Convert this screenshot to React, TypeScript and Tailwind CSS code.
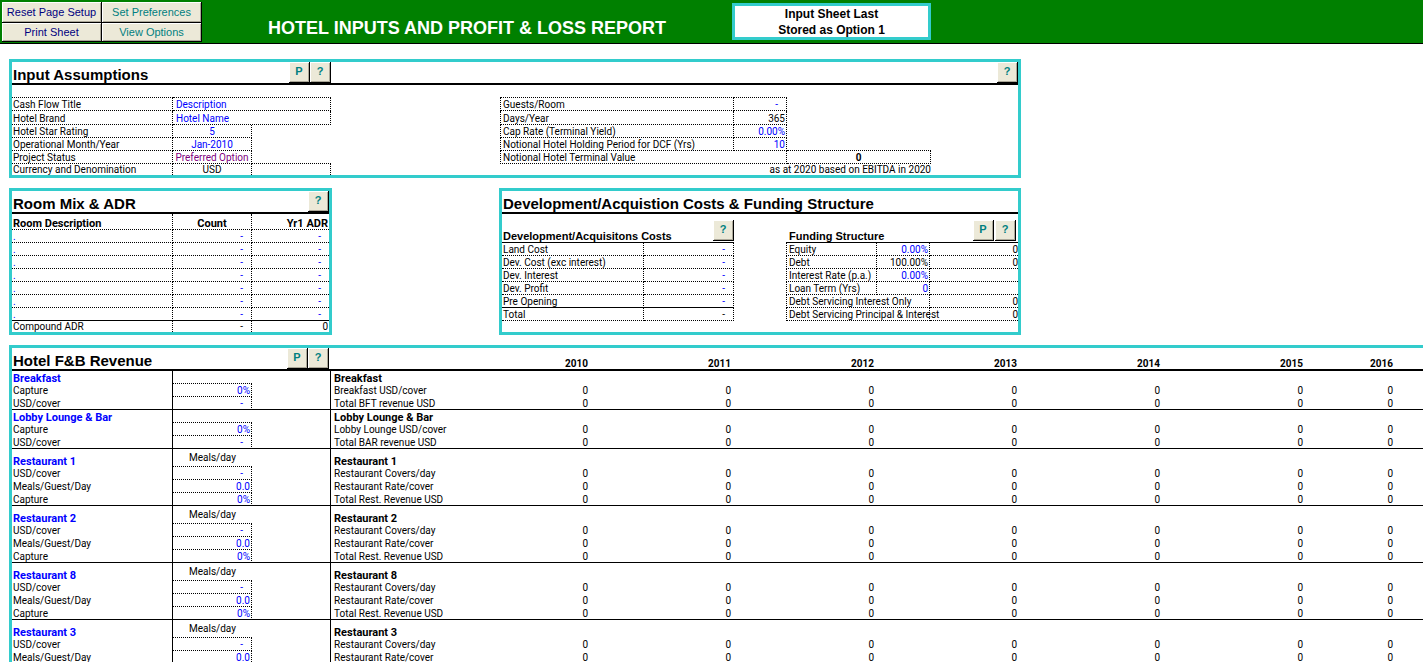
import React from 'react';
import clsx from 'clsx';

interface FieldRow {
  label: string;
  value: string;
  tone?: string;
}

interface RevenueBlock {
  title: string;
  mealsPerDay?: boolean;
  rows: { label: string; value: string; result: string }[];
}

const YEARS = ['2010', '2011', '2012', '2013', '2014', '2015', '2016'];

const COST_ROWS = ['Land Cost', 'Dev. Cost (exc interest)', 'Dev. Interest', 'Dev. Profit', 'Pre Opening'];

const FUNDING_ROWS = [
  { label: 'Equity', value: '0.00%', amount: '0', tone: 'text-[#0000ff]' },
  { label: 'Debt', value: '100.00%', amount: '0', tone: 'text-black' },
  { label: 'Interest Rate (p.a.)', value: '0.00%', amount: '', tone: 'text-[#0000ff]' },
  { label: 'Loan Term (Yrs)', value: '0', amount: '', tone: 'text-[#0000ff]' },
];

const PROJECT_ROWS: FieldRow[] = [
  { label: 'Hotel Star Rating', value: '5', tone: 'text-[#0000ff]' },
  { label: 'Operational Month/Year', value: 'Jan-2010', tone: 'text-[#0000ff]' },
  { label: 'Project Status', value: 'Preferred Option', tone: 'text-[#800080]' },
];

const restaurant = (title: string): RevenueBlock => ({
  title,
  mealsPerDay: true,
  rows: [
    { label: 'USD/cover', value: '-', result: 'Restaurant Covers/day' },
    { label: 'Meals/Guest/Day', value: '0.0', result: 'Restaurant Rate/cover' },
    { label: 'Capture', value: '0%', result: 'Total Rest. Revenue USD' },
  ],
});

const REVENUE: RevenueBlock[] = [
  {
    title: 'Breakfast',
    rows: [
      { label: 'Capture', value: '0%', result: 'Breakfast USD/cover' },
      { label: 'USD/cover', value: '-', result: 'Total BFT revenue USD' },
    ],
  },
  {
    title: 'Lobby Lounge & Bar',
    rows: [
      { label: 'Capture', value: '0%', result: 'Lobby Lounge USD/cover' },
      { label: 'USD/cover', value: '-', result: 'Total BAR revenue USD' },
    ],
  },
  restaurant('Restaurant 1'),
  restaurant('Restaurant 2'),
  restaurant('Restaurant 8'),
  restaurant('Restaurant 3'),
];

// Dashes stand for zero and sit a little further from the cell edge
const valuePad = (value: string) => (value === '-' ? 'pr-2' : 'pr-px');

const TABLE = "table-fixed border-separate border-spacing-0 border-black font-['Roboto','Liberation_Sans',sans-serif] whitespace-nowrap";
const BOTTOM = 'border-b border-dotted border-black';
const CELL = 'border-b border-r border-dotted border-black';

const SheetButton: React.FC<{ kind: 'P' | '?' }> = ({ kind }) => (
  <button
    type="button"
    aria-label={kind === 'P' ? 'Print section' : 'Help'}
    className="h-[21px] w-[21px] shrink-0 border-r border-b border-black bg-[#ece9d8] pb-0.5 text-[11px] leading-[16px] font-bold text-[#008080] shadow-[inset_1px_1px_0_#ffffff,inset_-1px_-1px_0_#aca899]"
  >
    {kind}
  </button>
);

const ToolbarButton: React.FC<{ label: string; tone: string }> = ({ label, tone }) => (
  <button
    type="button"
    className={clsx(
      'border-r border-b border-black bg-[#ece9d8] text-[11px] leading-[16px] shadow-[inset_1px_1px_0_#ffffff,inset_-1px_-1px_0_#aca899]',
      tone
    )}
  >
    {label}
  </button>
);

const SectionTitle: React.FC<{ children: React.ReactNode }> = ({ children }) => (
  <h2 className="pt-[5px] pl-px text-[15px] leading-[16px] font-bold whitespace-nowrap">{children}</h2>
);

const Header = () => (
  <header className="flex h-11 items-start border-b border-black bg-[#008000]">
    <div className="mt-0.5 ml-0.5 grid w-[200px] shrink-0 grid-cols-2 grid-rows-[21px_19px]">
      <ToolbarButton label="Reset Page Setup" tone="text-[#000080]" />
      <ToolbarButton label="Set Preferences" tone="text-[#008080]" />
      <ToolbarButton label="Print Sheet" tone="text-[#000080]" />
      <ToolbarButton label="View Options" tone="text-[#008080]" />
    </div>
    <h1 className="mt-4 ml-[66px] w-[464px] shrink-0 text-[18px] leading-6 font-bold text-white">
      HOTEL INPUTS AND PROFIT &amp; LOSS REPORT
    </h1>
    <div className="mt-[3px] h-[37px] w-[199px] shrink-0 border-3 border-[#33cccc] bg-white text-center text-[12px] leading-[16px] font-bold">
      Input Sheet Last
      <br />
      Stored as Option 1
    </div>
  </header>
);

const InputAssumptions = () => (
  <section className="w-full max-w-[1012px] border-3 border-[#33cccc]">
    <div className="flex h-[23px] border-b-2 border-black">
      <div className="flex w-[319px]">
        <SectionTitle>Input Assumptions</SectionTitle>
        <div className="ml-auto flex">
          <SheetButton kind="P" />
          <SheetButton kind="?" />
        </div>
      </div>
      <div className="ml-auto">
        <SheetButton kind="?" />
      </div>
    </div>

    <div className="mt-3 flex items-start gap-[169px]">
      <table className={clsx(TABLE, 'w-[319px] shrink-0')}>
        <colgroup>
          <col className="w-[161px]" />
          <col className="w-[79px]" />
          <col className="w-[79px]" />
        </colgroup>
        <tbody>
          <tr className="h-3.5">
            <td className={clsx(CELL, 'border-t pl-px')}>Cash Flow Title</td>
            <td colSpan={2} className={clsx(CELL, 'border-t pl-[3px] text-[#0000ff]')}>Description</td>
          </tr>
          <tr className="h-3.5">
            <td className={clsx(CELL, 'pl-px align-bottom')}>Hotel Brand</td>
            <td colSpan={2} className={clsx(CELL, 'pl-[3px] align-bottom text-[#0000ff]')}>Hotel Name</td>
          </tr>
          {PROJECT_ROWS.map((row, i) => (
            <tr key={row.label} className="h-[13px]">
              <td className={clsx(CELL, 'pl-px')}>{row.label}</td>
              <td className={clsx(CELL, 'text-center', row.tone)}>{row.value}</td>
              <td className={clsx(i === PROJECT_ROWS.length - 1 && BOTTOM)}></td>
            </tr>
          ))}
          <tr>
            <td className="border-r border-dotted border-black pl-px">Currency and Denomination</td>
            <td className="border-r border-dotted border-black text-center">USD</td>
            <td className="border-r border-dotted border-black"></td>
          </tr>
        </tbody>
      </table>

      <table className={clsx(TABLE, 'w-[431px] shrink-0')}>
        <colgroup>
          <col className="w-[234px]" />
          <col className="w-[53px]" />
          <col className="w-[144px]" />
        </colgroup>
        <tbody>
          <tr className="h-3.5">
            <td className={clsx(CELL, 'border-t border-l pl-0.5')}>Guests/Room</td>
            <td className={clsx(CELL, 'border-t pr-2 text-right text-[#0000ff]')}>-</td>
            <td></td>
          </tr>
          <tr className="h-3.5">
            <td className={clsx(CELL, 'border-l pl-0.5 align-bottom')}>Days/Year</td>
            <td className={clsx(CELL, 'pr-px text-right align-bottom')}>365</td>
            <td></td>
          </tr>
          <tr className="h-[13px]">
            <td className={clsx(CELL, 'border-l pl-0.5')}>Cap Rate (Terminal Yield)</td>
            <td className={clsx(CELL, 'pr-px text-right text-[#0000ff]')}>0.00%</td>
            <td></td>
          </tr>
          <tr className="h-[13px]">
            <td className={clsx(CELL, 'border-l pl-0.5')}>Notional Hotel Holding Period for DCF (Yrs)</td>
            <td className={clsx(CELL, 'pr-px text-right text-[#0000ff]')}>10</td>
            <td className={BOTTOM}></td>
          </tr>
          <tr className="h-[13px]">
            <td colSpan={2} className={clsx(CELL, 'border-l pl-0.5')}>Notional Hotel Terminal Value</td>
            <td className={clsx(CELL, 'text-center font-bold')}>0</td>
          </tr>
          <tr>
            <td colSpan={3} className="text-right">as at 2020 based on EBITDA in 2020</td>
          </tr>
        </tbody>
      </table>
    </div>
  </section>
);

const RoomMix = () => (
  <section className="w-[323px] shrink-0 border-3 border-[#33cccc]">
    <div className="flex h-[23px] justify-between border-b-2 border-black">
      <SectionTitle>Room Mix &amp; ADR</SectionTitle>
      <SheetButton kind="?" />
    </div>
    <table className={clsx(TABLE, 'w-full')}>
      <colgroup>
        <col className="w-[161px]" />
        <col className="w-[79px]" />
        <col />
      </colgroup>
      <thead>
        <tr className="h-4 text-[11px]">
          <th className={clsx(CELL, 'pl-px text-left align-bottom')}>Room Description</th>
          <th className={clsx(CELL, 'text-center align-bottom')}>Count</th>
          <th className={clsx(BOTTOM, 'pr-px text-right align-bottom')}>Yr1 ADR</th>
        </tr>
      </thead>
      <tbody>
        {[1, 2, 3, 4, 5, 6, 7].map(n => (
          <tr key={n} className="h-[13px] text-[#0000ff]">
            <td className={clsx(CELL, 'pl-px', n === 7 && '[border-bottom-style:solid]')}>.</td>
            <td className={clsx(CELL, 'pr-2 text-right', n === 7 && '[border-bottom-style:solid]')}>-</td>
            <td className={clsx(BOTTOM, 'pr-2 text-right', n === 7 && '[border-bottom-style:solid]')}>-</td>
          </tr>
        ))}
        <tr>
          <td className="border-r border-dotted border-black pl-px">Compound ADR</td>
          <td className="border-r border-dotted border-black pr-2 text-right">-</td>
          <td className="pr-px text-right">0</td>
        </tr>
      </tbody>
    </table>
  </section>
);

const DevelopmentCosts = () => (
  <section className="w-[522px] shrink-0 border-3 border-[#33cccc]">
    <div className="h-[23px] border-b-2 border-black">
      <SectionTitle>Development/Acquistion Costs &amp; Funding Structure</SectionTitle>
    </div>
    <div className="flex items-start justify-between">
      <div className="w-[232px]">
        <div className="flex h-[29px] items-end justify-between border-b border-black">
          <h3 className="pl-px text-[11px] font-bold">Development/Acquisitons Costs</h3>
          <div className="mb-px flex">
            <SheetButton kind="?" />
          </div>
        </div>
        <table className={clsx(TABLE, 'w-full')}>
          <colgroup>
            <col className="w-[142px]" />
            <col />
          </colgroup>
          <tbody>
            {COST_ROWS.map((label, i) => {
              const last = i === COST_ROWS.length - 1;
              return (
                <tr key={label} className="h-[13px]">
                  <td className={clsx(CELL, 'pl-px', last && '[border-bottom-style:solid]')}>{label}</td>
                  <td className={clsx(CELL, 'pr-2 text-right text-[#0000ff]', last && '[border-bottom-style:solid]')}>-</td>
                </tr>
              );
            })}
            <tr className="h-[13px]">
              <td className={clsx(CELL, 'pl-px')}>Total</td>
              <td className={clsx(CELL, 'pr-2 text-right')}>-</td>
            </tr>
          </tbody>
        </table>
      </div>

      <div className="w-[232px]">
        <div className="flex h-[29px] items-end justify-between border-b border-black">
          <h3 className="pl-[3px] text-[11px] font-bold">Funding Structure</h3>
          <div className="mr-0.5 mb-px flex gap-px">
            <SheetButton kind="P" />
            <SheetButton kind="?" />
          </div>
        </div>
        <table className={clsx(TABLE, 'w-full')}>
          <colgroup>
            <col className="w-[91px]" />
            <col className="w-[53px]" />
            <col />
          </colgroup>
          <tbody>
            {FUNDING_ROWS.map(row => (
              <tr key={row.label} className="h-[13px]">
                <td className={clsx(CELL, 'border-l pl-0.5')}>{row.label}</td>
                <td className={clsx(CELL, 'pr-px text-right', row.tone)}>{row.value}</td>
                <td className={clsx(BOTTOM, 'text-right')}>{row.amount}</td>
              </tr>
            ))}
            {['Debt Servicing Interest Only', 'Debt Servicing Principal & Interest'].map(label => (
              <tr key={label} className="h-[13px]">
                <td colSpan={2} className={clsx(CELL, 'border-l pl-0.5')}>{label}</td>
                <td className={clsx(BOTTOM, 'text-right')}>0</td>
              </tr>
            ))}
          </tbody>
        </table>
      </div>
    </div>
    <div className="h-[11px]"></div>
  </section>
);

const HotelRevenue = () => (
  <section className="border-t-3 border-l-3 border-[#33cccc]">
    <table className={clsx(TABLE, 'w-full')}>
      <colgroup>
        <col className="w-[161px]" />
        <col className="w-[79px]" />
        <col className="w-[79px]" />
        <col className="w-[115px]" />
        {YEARS.map(year => (
          <col key={year} className={year === '2016' ? 'w-[90px]' : 'w-[143px]'} />
        ))}
        <col />
      </colgroup>
      <thead>
        <tr className="h-[23px]">
          <th colSpan={3} className="border-b-2 border-black text-left font-['Liberation_Sans',Arial,sans-serif]">
            <div className="flex h-[21px] pr-0.5">
              <SectionTitle>Hotel F&amp;B Revenue</SectionTitle>
              <div className="ml-auto flex">
                <SheetButton kind="P" />
                <SheetButton kind="?" />
              </div>
            </div>
          </th>
          <td className="border-b-2 border-black"></td>
          {YEARS.map(year => (
            <th key={year} className="border-b-2 border-black pr-px text-right align-bottom">{year}</th>
          ))}
          <td className="border-b-2 border-black"></td>
        </tr>
      </thead>
      {REVENUE.map(block => (
        <tbody key={block.title}>
          <tr className={block.mealsPerDay ? 'h-[18px]' : 'h-[13px]'}>
            <th className="border-r border-black pl-px text-left align-bottom text-[11px] text-[#0000ff]">{block.title}</th>
            <td className={clsx(BOTTOM, 'pb-[3px] text-center align-bottom')}>{block.mealsPerDay && 'Meals/day'}</td>
            <td className="border-r border-black"></td>
            <th className="pl-[3px] text-left align-bottom text-[11px]">{block.title}</th>
            <td colSpan={YEARS.length + 1}></td>
          </tr>
          {block.rows.map((row, i) => {
            const last = i === block.rows.length - 1;
            const rule = last && 'border-b';
            return (
              <tr key={row.label} className="h-[13px]">
                <td className={clsx('border-r border-black pl-px', rule)}>{row.label}</td>
                <td className={clsx(CELL, 'text-right text-[#0000ff]', valuePad(row.value), last && '[border-bottom-style:solid]')}>
                  {row.value}
                </td>
                <td className={clsx('border-r border-black', rule)}></td>
                <td className={clsx('border-black pl-[3px]', rule)}>{row.result}</td>
                {YEARS.map(year => (
                  <td key={year} className={clsx('border-black pr-px text-right', rule)}>0</td>
                ))}
                <td className={clsx('border-black', rule)}></td>
              </tr>
            );
          })}
        </tbody>
      ))}
    </table>
  </section>
);

const App: React.FC = () => (
  <div className="h-screen overflow-hidden bg-white font-['Liberation_Sans',Arial,sans-serif] text-[10px] leading-[11px] text-black">
    <Header />
    <main className="mt-[15px] flex flex-col gap-2.5 pl-[9px]">
      <InputAssumptions />
      <div className="flex w-full max-w-[1012px] items-start justify-between">
        <RoomMix />
        <DevelopmentCosts />
      </div>
      <HotelRevenue />
    </main>
  </div>
);

export default App;
